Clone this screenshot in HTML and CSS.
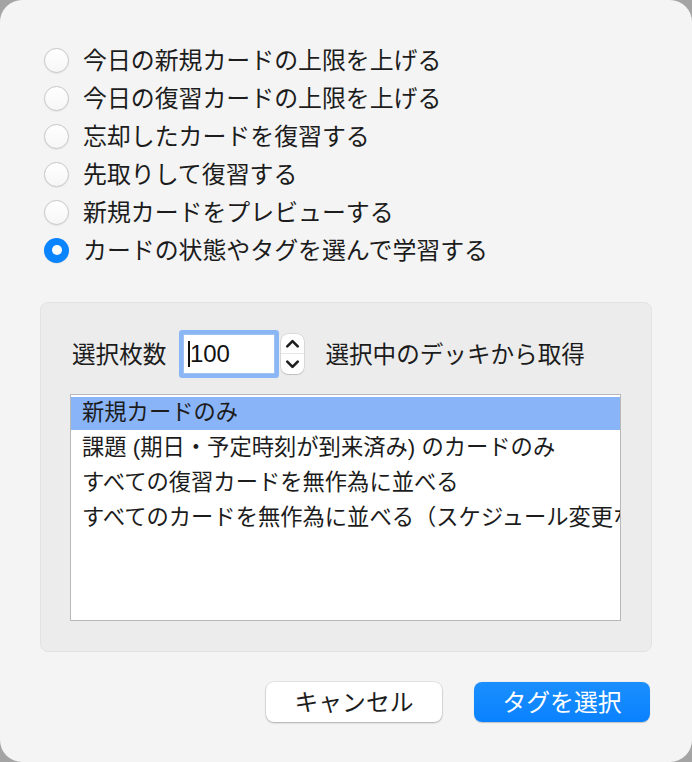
FILE: index.html
```html
<!DOCTYPE html>
<html lang="ja">
<head>
<meta charset="utf-8">
<title>カスタム学習</title>
<link rel="stylesheet" href="styles.css">
</head>
<body>
<div class="window">
  <div class="options">
    <label class="opt"><span class="radio"></span><span class="opt-text">今日の新規カードの上限を上げる</span></label>
    <label class="opt"><span class="radio"></span><span class="opt-text">今日の復習カードの上限を上げる</span></label>
    <label class="opt"><span class="radio"></span><span class="opt-text">忘却したカードを復習する</span></label>
    <label class="opt"><span class="radio"></span><span class="opt-text">先取りして復習する</span></label>
    <label class="opt"><span class="radio"></span><span class="opt-text">新規カードをプレビューする</span></label>
    <label class="opt"><span class="radio checked"></span><span class="opt-text">カードの状態やタグを選んで学習する</span></label>
  </div>
  <div class="panel">
    <div class="count-row">
      <span class="label">選択枚数</span>
      <div class="field"><span class="caret"></span>100</div>
      <div class="stepper">
        <svg class="chev" viewBox="0 0 20 20" width="20" height="20"><path d="M4.5 13 L10 7.5 L15.5 13" fill="none" stroke="#1e1e1e" stroke-width="2.8" stroke-linecap="round" stroke-linejoin="round"/></svg>
        <span class="step-sep"></span>
        <svg class="chev" viewBox="0 0 20 20" width="20" height="20"><path d="M4.5 7 L10 12.5 L15.5 7" fill="none" stroke="#1e1e1e" stroke-width="2.8" stroke-linecap="round" stroke-linejoin="round"/></svg>
      </div>
      <span class="label from">選択中のデッキから取得</span>
    </div>
    <div class="list">
      <div class="item selected">新規カードのみ</div>
      <div class="item">課題 (期日・予定時刻が到来済み) のカードのみ</div>
      <div class="item">すべての復習カードを無作為に並べる</div>
      <div class="item">すべてのカードを無作為に並べる（スケジュール変更なし）</div>
    </div>
  </div>
  <div class="buttons">
    <button class="btn cancel">キャンセル</button>
    <button class="btn primary">タグを選択</button>
  </div>
</div>
</body>
</html>
```
FILE: styles.css
```css
html, body {
  margin: 0;
  padding: 0;
  background: #a4a4a4;
}
body {
  font-family: "Liberation Sans", "Noto Sans CJK JP", sans-serif;
  color: #1c1c1c;
}
.window {
  width: 692px;
  height: 762px;
  box-sizing: border-box;
  background: #f4f4f4;
  border-radius: 22px;
  display: flex;
  flex-direction: column;
  padding: 41px 40px 0 40px;
  overflow: hidden;
}
.options {
  display: flex;
  flex-direction: column;
  padding-left: 4px;
}
.opt {
  display: flex;
  align-items: center;
  height: 38px;
  font-size: 23.9px;
}
.opt-text {
  font-family: "Noto Sans CJK JP", sans-serif;
  line-height: 1;
  position: relative;
  top: -1px;
}
.radio {
  width: 25px;
  height: 25px;
  box-sizing: border-box;
  border-radius: 50%;
  border: 1px solid #c9c9c9;
  background: linear-gradient(#ffffff, #f6f6f6);
  box-shadow: 0 0.5px 1px rgba(0,0,0,0.12);
  margin-right: 14px;
  flex: none;
  display: flex;
  align-items: center;
  justify-content: center;
}
.radio.checked {
  border: none;
  background: #0a84ff;
}
.radio.checked::after {
  content: "";
  width: 10px;
  height: 10px;
  border-radius: 50%;
  background: #fff;
}
.panel {
  margin-top: 33px;
  height: 350px;
  box-sizing: border-box;
  background: #ececec;
  border: 1px solid #e2e2e2;
  border-radius: 8px;
  padding: 27px 30px 30px 29px;
  display: flex;
  flex-direction: column;
}
.count-row {
  display: flex;
  align-items: center;
  height: 48px;
  padding-left: 2px;
}
.label {
  font-family: "Noto Sans CJK JP", sans-serif;
  font-size: 23.6px;
  line-height: 1;
}
.field {
  margin-left: 17px;
  width: 92px;
  height: 40px;
  box-sizing: border-box;
  background: #fff;
  border: 1px solid #9fc2f2;
  border-radius: 1px;
  box-shadow: 0 0 0 4px #8ab6f5;
  font-size: 24px;
  line-height: 38px;
  padding-left: 4px;
  display: flex;
  align-items: center;
  color: #111;
}
.caret {
  width: 1.5px;
  height: 26px;
  background: #111;
}
.stepper {
  margin-left: 6px;
  width: 23px;
  height: 40px;
  box-sizing: border-box;
  background: #fff;
  border-radius: 7px;
  box-shadow: 0 0 0 0.5px rgba(0,0,0,0.15), 0 1px 1px rgba(0,0,0,0.12);
  display: flex;
  flex-direction: column;
  align-items: center;
  justify-content: space-between;
}
.chev {
  width: 19px;
  height: 19px;
}
.step-sep {
  width: 23px;
  height: 1px;
  background: #e6e6e6;
}
.from {
  margin-left: 21px;
}
.list {
  margin-top: 16px;
  height: 228px;
  box-sizing: border-box;
  background: #fff;
  border: 1px solid #b8b8b8;
  padding-top: 2px;
  overflow: hidden;
  white-space: nowrap;
}
.item {
  height: 35px;
  line-height: 33px;
  font-size: 22.3px;
  padding-left: 11px;
  font-family: "Liberation Sans", "Noto Sans CJK JP", sans-serif;
  color: #1c1c1c;
}
.item.selected {
  background: #8ab4f8;
  height: 33px;
  line-height: 31px;
  margin-bottom: 1px;
}
.buttons {
  display: flex;
  justify-content: flex-end;
  gap: 32px;
  margin-top: 30px;
  padding-right: 2px;
}
.btn {
  width: 176px;
  height: 40px;
  border: none;
  border-radius: 8px;
  font-family: "Noto Sans CJK JP", sans-serif;
  font-size: 23.8px;
  line-height: 1;
  padding: 0 0 2px 0;
  cursor: pointer;
}
.cancel {
  background: #fff;
  color: #1c1c1c;
  box-shadow: 0 0 0 0.5px rgba(0,0,0,0.12), 0 1px 2px rgba(0,0,0,0.25);
}
.primary {
  background: linear-gradient(#1b8fff, #0a82fe);
  color: #fff;
  box-shadow: 0 0.5px 1px rgba(0,0,0,0.2);
}
```
